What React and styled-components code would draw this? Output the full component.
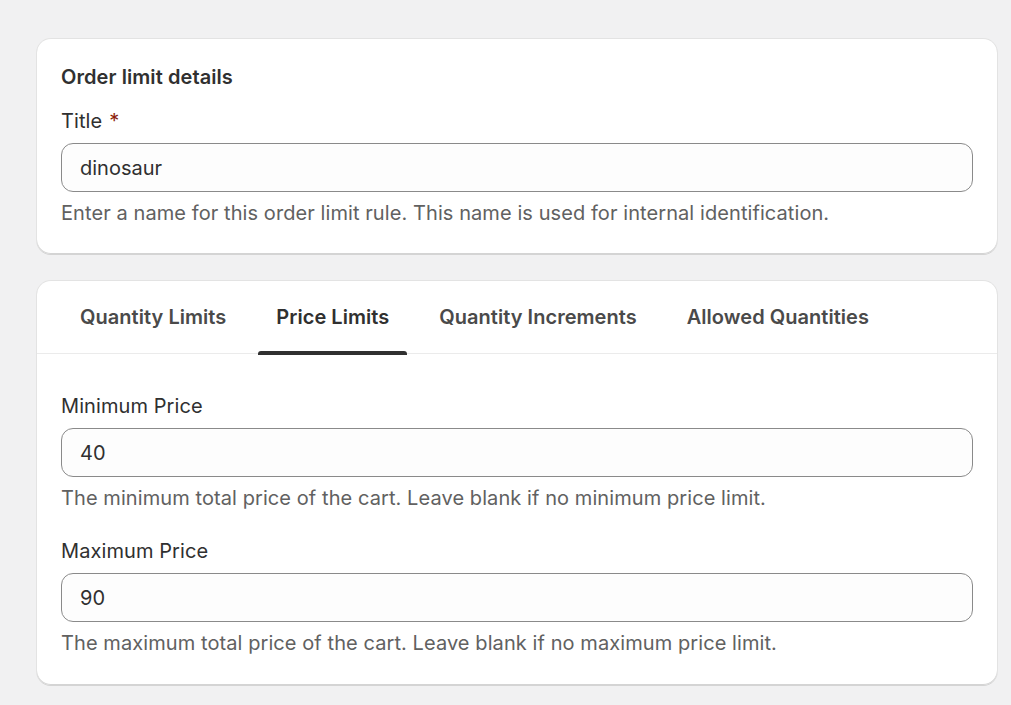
import React, { useState } from "react";
import styled, { createGlobalStyle } from "styled-components";

const GlobalStyle = createGlobalStyle`
  html, body {
    margin: 0;
    padding: 0;
    background: #f1f1f2;
    font-family: Inter, "Noto Sans", sans-serif;
    color: #303030;
    letter-spacing: 0.08px;
  }
`;

const Page = styled.div`
  padding: 39px 14px 20px 37px;
  display: flex;
  flex-direction: column;
  gap: 27px;
`;

const Card = styled.div`
  background: #fff;
  border-radius: 14px;
  box-shadow: 0 1px 0 0 #d4d4d4, 0 0 0 1px #e3e3e3, inset 0 -1px 0 #d4d4d4;
  overflow: hidden;
`;

const CardBody = styled.div`
  padding: ${(p) => p.$pad || "24px"};
  display: flex;
  flex-direction: column;
`;

const Heading = styled.h2`
  margin: 0 0 16px;
  font-size: 20px;
  line-height: 28px;
  font-weight: 600;
`;

const Field = styled.div`
  display: flex;
  flex-direction: column;
  & + & {
    margin-top: 25px;
  }
`;

const Label = styled.label`
  font-size: 20px;
  line-height: 28px;
  margin-bottom: 8px;
`;

const Required = styled.span`
  color: #8e1f0b;
  margin-left: 7px;
`;

const Input = styled.input`
  height: 49px;
  box-sizing: border-box;
  border: 1px solid #8a8a8a;
  border-radius: 12px;
  background: #fdfdfd;
  padding: 0 18px;
  font: inherit;
  font-size: 20px;
  color: #303030;
  outline: none;
`;

const Help = styled.div`
  font-size: 20px;
  line-height: 28px;
  color: #616161;
  margin-top: 7px;
`;

const TabBar = styled.div`
  display: flex;
  gap: 14px;
  padding: 0 25px;
  height: 73px;
  box-sizing: border-box;
  border-bottom: 1px solid #ebebeb;
`;

const Tab = styled.button`
  position: relative;
  border: none;
  background: none;
  padding: 0 18px;
  font-family: inherit;
  font-size: 20px;
  font-weight: 600;
  letter-spacing: 0.04px;
  color: ${(p) => (p.$active ? "#303030" : "#4a4a4a")};
  cursor: pointer;
  &::after {
    content: "";
    position: absolute;
    left: 0;
    right: 0;
    bottom: -2px;
    height: 4px;
    border-radius: 3px 3px 0 0;
    background: ${(p) => (p.$active ? "#303030" : "transparent")};
  }
`;

const tabs = ["Quantity Limits", "Price Limits", "Quantity Increments", "Allowed Quantities"];

export default function App() {
  const [active, setActive] = useState(1);
  return (
    <>
      <GlobalStyle />
      <Page>
        <Card>
          <CardBody $pad="24px 24px 27px">
            <Heading>Order limit details</Heading>
            <Field>
              <Label>
                Title<Required>*</Required>
              </Label>
              <Input defaultValue="dinosaur" />
              <Help>Enter a name for this order limit rule. This name is used for internal identification.</Help>
            </Field>
          </CardBody>
        </Card>
        <Card>
          <TabBar>
            {tabs.map((t, i) => (
              <Tab key={t} $active={i === active} onClick={() => setActive(i)}>
                {t}
              </Tab>
            ))}
          </TabBar>
          <CardBody $pad="38px 24px 28px">
            <Field>
              <Label>Minimum Price</Label>
              <Input defaultValue="40" />
              <Help>The minimum total price of the cart. Leave blank if no minimum price limit.</Help>
            </Field>
            <Field>
              <Label>Maximum Price</Label>
              <Input defaultValue="90" />
              <Help>The maximum total price of the cart. Leave blank if no maximum price limit.</Help>
            </Field>
          </CardBody>
        </Card>
      </Page>
    </>
  );
}
